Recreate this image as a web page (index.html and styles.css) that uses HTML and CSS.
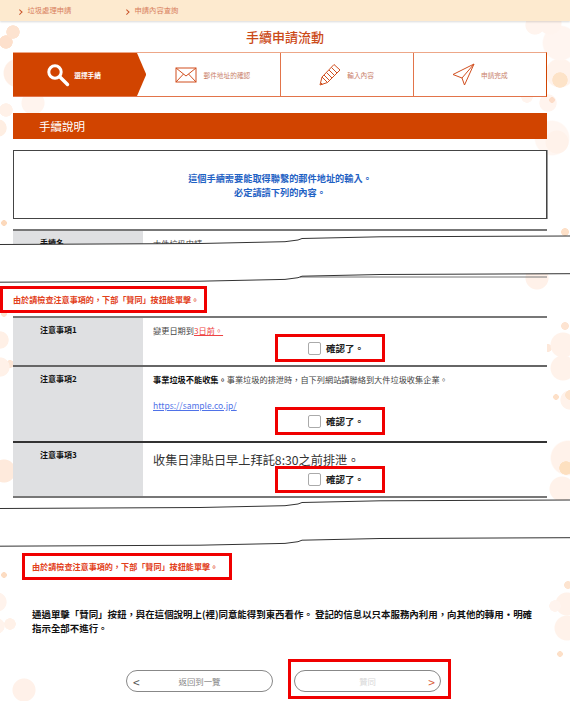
FILE: index.html
```html
<!DOCTYPE html>
<html lang="zh-Hant">
<head>
    <meta charset="UTF-8">
    <meta name="viewport" content="width=device-width, initial-scale=1.0">
    <title>手續申請流動</title>
    <link rel="stylesheet" href="styles.css">
</head>
<body>
    <nav class="top-nav">
        <a href="#" class="nav-item">垃圾處理申請</a>
        <a href="#" class="nav-item">申請內容查詢</a>
    </nav>

    <h1 class="page-title">手續申請流動</h1>

    <ol class="stepper">
        <li class="step step-active">
            <svg class="step-icon" width="24" height="24" viewBox="0 0 24 24">
                <circle cx="9" cy="9" r="6.200" fill="none" stroke="#fff" stroke-width="3"/>
                <path d="M14 14 L21.500 21.500" stroke="#fff" stroke-width="3.400" stroke-linecap="round"/>
            </svg>
            <span>選擇手續</span>
        </li>
        <li class="step">
            <svg class="step-icon" width="22" height="16" viewBox="0 0 22 16">
                <rect x="1" y="1" width="20" height="14" fill="none" stroke="#d14f1f"/>
                <path d="M1 1 L11 9 L21 1 M1 15 L8.500 7 M21 15 L13.500 7" fill="none" stroke="#d14f1f"/>
            </svg>
            <span>郵件地址的確認</span>
        </li>
        <li class="step">
            <svg class="step-icon" width="22" height="23" viewBox="0 0 22 23">
                <path d="M1 22 L3 14 L15 1.500 L21 7 L8.500 19.500 Z M3 14 L8.500 19.500 M5 12 L10.500 17.500 M7.500 9.500 L13 15 M10 7 L15.500 12.500 M12.500 4.500 L18 10 M1.500 19.500 L3.500 21.500" fill="none" stroke="#d14f1f"/>
            </svg>
            <span>輸入內容</span>
        </li>
        <li class="step">
            <svg class="step-icon" width="23" height="23" viewBox="0 0 23 23">
                <path d="M22 1 L1 11.500 L10 15 L12.500 22 Z M22 1 L10 15" fill="none" stroke="#d14f1f" stroke-linejoin="round"/>
            </svg>
            <span>申請完成</span>
        </li>
    </ol>

    <h2 class="section-title">手續說明</h2>

    <div class="notice">
        <p>這個手續需要能取得聯繫的郵件地址的輸入。</p>
        <p>必定請讀下列的內容。</p>
    </div>

    <div class="info-table info-table-cut">
        <div class="info-row">
            <div class="info-head">手續名</div>
            <div class="info-value">大件垃圾申請</div>
        </div>
    </div>

    <svg class="tear" width="570" height="50" viewBox="0 0 570 50">
        <path class="tear-fill" d="M0 10.500 L200 9.500 L285 7.700 L298 6 L302 4.500 L380 2.800 L570 2 L570 39.700 L380 40.500 L302 42.200 L298 43.700 L285 45.400 L200 47.200 L0 48.200 Z"/>
        <path class="tear-page-line" d="M300 43 L547 43"/>
        <path class="tear-line" d="M0 10.500 L200 9.500 L285 7.700 L298 6 L302 4.500 L380 2.800 L570 2"/>
        <path class="tear-line" d="M0 48.200 L200 47.200 L285 45.400 L298 43.700 L302 42.200 L380 40.500 L570 39.700"/>
    </svg>

    <p class="warning warning-first">由於請檢查注意事項的&#xFF0C;下部「贊同」按鈕能單擊。</p>

    <div class="info-table">
        <div class="info-row row-one">
            <div class="info-head">注意事項1</div>
            <div class="info-value">
                <p>變更日期到<span class="due">3日前。</span></p>
                <label class="confirm confirm-one"><input type="checkbox"><span>確認了。</span></label>
            </div>
        </div>
        <div class="info-row row-two">
            <div class="info-head">注意事項2</div>
            <div class="info-value">
                <p><b>事業垃圾不能收集。</b>事業垃圾的排泄時&#xFF0C;自下列網站請聯絡到大件垃圾收集企業。</p>
                <p class="sample-link"><a href="#">https://sample.co.jp/</a></p>
                <label class="confirm confirm-two"><input type="checkbox"><span>確認了。</span></label>
            </div>
        </div>
        <div class="info-row row-three">
            <div class="info-head">注意事項3</div>
            <div class="info-value">
                <p class="big-text">收集日津貼日早上拜託8:30之前排泄。</p>
                <label class="confirm confirm-three"><input type="checkbox"><span>確認了。</span></label>
            </div>
        </div>
    </div>

    <svg class="tear tear-second" width="570" height="50" viewBox="0 0 570 50">
        <path class="tear-fill" d="M0 10.500 L200 9.500 L285 7.700 L298 6 L302 4.500 L380 2.800 L570 2 L570 39.700 L380 40.500 L302 42.200 L298 43.700 L285 45.400 L200 47.200 L0 48.200 Z"/>
        <path class="tear-line" d="M0 10.500 L200 9.500 L285 7.700 L298 6 L302 4.500 L380 2.800 L570 2"/>
        <path class="tear-line" d="M0 48.200 L200 47.200 L285 45.400 L298 43.700 L302 42.200 L380 40.500 L570 39.700"/>
    </svg>

    <p class="warning warning-second">由於請檢查注意事項的&#xFF0C;下部「贊同」按鈕能單擊。</p>

    <p class="agreement">通過單擊「贊同」按鈕&#xFF0C;與在這個說明上(裡)同意能得到東西看作。 登記的信息以只本服務內利用&#xFF0C;向其他的轉用·明確<br>指示全部不進行。</p>

    <div class="button-row">
        <button class="pill-button back-button"><span class="pill-arrow">&lt;</span>返回到一覽</button>
        <div class="button-mark">
            <button class="pill-button agree-button" disabled>贊同<span class="pill-arrow">&gt;</span></button>
        </div>
    </div>
</body>
</html>
```

FILE: styles.css
```css
html {
    background-color: #ffffff;
}
body {
    font-family: "Noto Sans CJK JP", "Noto Sans CJK TC", sans-serif;
    color: #222;
    margin: 0;
    height: 701px;
    overflow: hidden;
    background-color: #ffffff;
    background-repeat: no-repeat;
    /* decorative bubbles down both page edges */
    background-image:
        radial-gradient(circle 7px at 13px 32px, #fde3d0 92%, transparent),
        radial-gradient(circle 7px at 6px 42px, #fde0cc 92%, transparent),
        radial-gradient(circle 15px at 18px 73px, #feeee4 92%, transparent),
        radial-gradient(circle 12px at 33px 103px, #fff4ee 92%, transparent),
        radial-gradient(circle 7px at 6px 110px, #fff1e8 92%, transparent),
        radial-gradient(circle 9px at -2px 128px, #feeee2 92%, transparent),
        radial-gradient(circle 3px at 4px 223px, #fcd9bc 92%, transparent),
        radial-gradient(circle 3px at 4px 314px, #fde4d0 92%, transparent),
        radial-gradient(circle 9px at 0 340px, #fff0e6 92%, transparent),
        radial-gradient(circle 10px at 0 367px, #fff1e8 92%, transparent),
        radial-gradient(circle 4px at 10px 364px, #fde6d6 92%, transparent),
        radial-gradient(circle 12px at 4px 471px, #feeadc 92%, transparent),
        radial-gradient(circle 3px at 4px 575px, #fcdcc2 92%, transparent),
        radial-gradient(circle 10px at -3px 602px, #fff3ec 92%, transparent),
        radial-gradient(circle 8px at -3px 626px, #fff3ec 92%, transparent),
        radial-gradient(circle 6px at 10px 624px, #fff1e8 92%, transparent),
        radial-gradient(circle 12px at 24px 690px, #fff1e9 92%, transparent),
        radial-gradient(circle 3px at 552px 100px, #fcdcc8 92%, transparent),
        radial-gradient(circle 8px at 560px 80px, #fde3c8 92%, transparent),
        radial-gradient(circle 10px at 535px 25px, #fff4ee 92%, transparent),
        radial-gradient(circle 12px at 550px 23px, #fff4ee 92%, transparent),
        radial-gradient(circle 18px at 560px 43px, #fff5f0 92%, transparent),
        radial-gradient(circle 15px at 560px 73px, #fff3ec 92%, transparent),
        radial-gradient(circle 6px at 527px 97px, #fff4ee 92%, transparent),
        radial-gradient(circle 9px at 548px 103px, #fff4ee 92%, transparent),
        radial-gradient(circle 12px at 557px 142px, #fff2ea 92%, transparent),
        radial-gradient(circle 18px at 552px 138px, #fff6f1 92%, transparent),
        radial-gradient(circle 4px at 565px 232px, #fde0c8 92%, transparent),
        radial-gradient(circle 12px at 537px 278px, #fff1e9 92%, transparent),
        radial-gradient(circle 4px at 565px 326px, #fde4d2 92%, transparent),
        radial-gradient(circle 13px at 563px 345px, #fff2ea 92%, transparent),
        radial-gradient(circle 4px at 548px 348px, #fde8da 92%, transparent),
        radial-gradient(circle 13px at 563px 368px, #fff2ea 92%, transparent),
        radial-gradient(circle 3px at 556px 397px, #fde0c8 92%, transparent),
        radial-gradient(circle 5px at 570px 395px, #fde3cc 92%, transparent),
        radial-gradient(circle 10px at 570px 400px, #fff2ea 92%, transparent),
        radial-gradient(circle 7px at 566px 468px, #fde0c0 92%, transparent),
        radial-gradient(circle 18px at 568px 458px, #fff2ea 92%, transparent),
        radial-gradient(circle 13px at 562px 489px, #fff2ea 92%, transparent),
        radial-gradient(circle 4px at 568px 585px, #fde4d0 92%, transparent),
        radial-gradient(circle 6px at 555px 606px, #fff4ee 92%, transparent),
        radial-gradient(circle 12px at 567px 604px, #fff2ea 92%, transparent),
        radial-gradient(circle 13px at 567px 628px, #fff2ea 92%, transparent),
        radial-gradient(circle 3px at 560px 654px, #fde0c8 92%, transparent);
}
p {
    margin: 0;
}

/* top nav */
.top-nav {
    display: flex;
    height: 21px;
    padding-left: 18px;
    background-color: #fdeacf;
    box-shadow: 0 1px 2px rgba(0,0,0,0.15);
}
.nav-item {
    width: 107px;
    font-size: 7.300px;
    line-height: 21px;
    color: #d8805e;
    text-decoration: none;
}
.nav-item::before {
    content: "";
    display: inline-block;
    width: 2.500px;
    height: 2.500px;
    margin-right: 6px;
    border-top: 1px solid #c9532a;
    border-right: 1px solid #c9532a;
    transform: rotate(45deg);
}

.page-title {
    margin: 0;
    height: 31px;
    font-size: 13px;
    font-weight: 500;
    line-height: 31px;
    text-align: center;
    color: #cb4a18;
}

/* stepper */
.stepper {
    display: grid;
    grid-template-columns: repeat(4, 1fr);
    height: 45px;
    margin: 0 23px 0 13px;
    padding: 0;
    list-style: none;
    box-sizing: border-box;
    background-color: #fff;
    border-top: 1px solid #eda788;
    border-right: 1px solid #d14400;
    border-bottom: 1px solid #e2744a;
}
.step {
    display: flex;
    align-items: center;
    justify-content: center;
    gap: 6px;
    font-size: 6.700px;
    color: #c9806a;
    border-left: 1px solid #e2744a;
}
.step:nth-child(2) {
    border-left: none;
}
.step-active {
    gap: 4px;
    padding-right: 12px;
    font-weight: 700;
    color: #fff;
    background-color: #d14400;
    border-left: none;
    clip-path: polygon(0 0, 124px 0, 100% 50%, 124px 100%, 0 100%);
}
.step-icon {
    flex: none;
}

.section-title {
    margin: 16px 23px 0 13px;
    height: 26px;
    padding-left: 26px;
    font-size: 11.500px;
    font-weight: 400;
    line-height: 26px;
    color: #fff;
    background-color: #d14400;
}

.notice {
    display: flex;
    flex-direction: column;
    justify-content: center;
    height: 69px;
    margin: 11px 23px 0 13px;
    box-sizing: border-box;
    font-size: 9.200px;
    font-weight: 700;
    line-height: 14px;
    text-align: center;
    color: #1f62c4;
    background-color: #fff;
    border: 1px solid #444;
    box-shadow: 1px 0 0 #999;
}

/* info tables */
.info-table {
    margin: 0 23px 0 13px;
    border-bottom: 2px solid #777;
}
.info-table-cut {
    height: 21px;
    margin-top: 10px;
    overflow: hidden;
    border-bottom: none;
}
.info-row {
    display: grid;
    grid-template-columns: 130px 1fr;
    border-top: 2px solid #777;
    box-sizing: border-box;
}
.row-one {
    height: 49px;
}
.row-two {
    height: 76px;
    border-top-color: #666;
}
.row-three {
    height: 55px;
    border-top-color: #333;
}
.info-head {
    padding: 5px 0 0 27px;
    font-size: 8px;
    font-weight: 700;
    line-height: 14px;
    color: #111;
    background-color: #dfe0e2;
}
.info-value {
    padding: 6px 0 0 10px;
    font-size: 8.200px;
    line-height: 13px;
    color: #444;
    background-color: #fff;
}
.info-value b {
    color: #111;
}
.due {
    color: #ee4444;
    text-decoration: underline;
}
.sample-link {
    margin-top: 13px;
    font-size: 8.500px;
}
.sample-link a {
    color: #4f72e8;
}
.big-text {
    font-size: 12.200px;
    line-height: 22px;
    color: #333;
}

.confirm {
    display: flex;
    align-items: center;
    gap: 5px;
    width: 110px;
    height: 28px;
    margin-left: 122px;
    padding-left: 30px;
    box-sizing: border-box;
    font-size: 9.500px;
    font-weight: 700;
    color: #222;
    border: 3px solid #f00000;
}
.confirm input {
    appearance: none;
    width: 13px;
    height: 13px;
    margin: 0;
    box-sizing: border-box;
    background-color: #fff;
    border: 1px solid #aaa;
    border-radius: 2px;
}
.confirm-one {
    margin-top: -3px;
}
.confirm-two {
    margin-top: -5px;
}
.confirm-three {
    height: 27px;
    margin-top: -5px;
}

/* torn screenshot edges */
.tear {
    display: block;
    margin-top: -16px;
    position: relative;
}
.tear-second {
    margin-top: 0;
}
.tear-fill {
    fill: #fff;
}
.tear-line {
    fill: none;
    stroke: #333;
    stroke-width: 1;
}
.tear-page-line {
    stroke: #777;
    stroke-width: 1;
}

.warning {
    box-sizing: border-box;
    height: 27px;
    font-size: 8.100px;
    font-weight: 700;
    line-height: 21px;
    color: #e2401a;
    border: 3px solid #f00000;
}
.warning-first {
    width: 207px;
    margin-top: 2px;
    margin-bottom: 3px;
    padding-left: 10px;
}
.warning-second {
    width: 210px;
    margin: 5px 0 0 22px;
    padding-left: 7px;
}

.agreement {
    margin: 27px 0 0 32px;
    font-size: 9.450px;
    font-weight: 700;
    line-height: 14px;
    color: #111;
    white-space: nowrap;
}

/* bottom buttons */
.button-row {
    display: flex;
    align-items: center;
    margin: 24px 0 0 126px;
}
.pill-button {
    position: relative;
    display: block;
    width: 147px;
    height: 22px;
    padding: 0;
    font-family: inherit;
    font-size: 8.400px;
    color: #888;
    background-color: #fff;
    border: 1px solid #888;
    border-radius: 11px;
}
.back-button {
    margin-top: 4px;
}
.pill-arrow {
    position: absolute;
    top: 3px;
    font-size: 12px;
    line-height: 15px;
}
.back-button .pill-arrow {
    left: 6px;
    color: #555;
}
.agree-button {
    color: #d8d8d8;
}
.agree-button .pill-arrow {
    right: 5px;
    color: #d8603c;
}
.button-mark {
    margin-left: 15px;
    padding: 8px 7px 4px 3px;
    border: 3px solid #f00000;
}
```
